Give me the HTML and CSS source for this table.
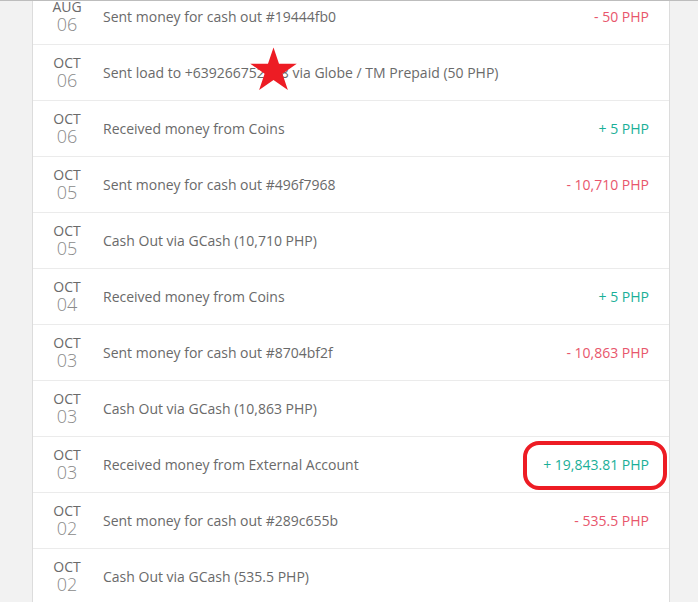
FILE: index.html
```html
<!DOCTYPE html>
<html>
<head>
<meta charset="utf-8">
<link rel="stylesheet" href="styles.css">
</head>
<body>
<div class="viewport">
  <div class="list">
    <div class="row"><div class="date"><span class="mon">AUG</span><span class="day">06</span></div><div class="desc">Sent money for cash out #19444fb0</div><div class="amt neg">- 50 PHP</div></div>
    <div class="row"><div class="date"><span class="mon">OCT</span><span class="day">06</span></div><div class="desc">Sent load to +639266752348 via Globe / TM Prepaid (50 PHP)</div><div class="amt"></div>
      <svg class="star" width="51" height="44" viewBox="0 0 49 44" preserveAspectRatio="none"><polygon fill="#ed1c24" points="24.5,0.5 29.79,16.72 46.85,16.74 33.06,26.78 38.31,43.01 24.5,33 10.69,43.01 15.94,26.78 2.15,16.74 19.21,16.72"/></svg>
    </div>
    <div class="row"><div class="date"><span class="mon">OCT</span><span class="day">06</span></div><div class="desc">Received money from Coins</div><div class="amt pos">+ 5 PHP</div></div>
    <div class="row"><div class="date"><span class="mon">OCT</span><span class="day">05</span></div><div class="desc">Sent money for cash out #496f7968</div><div class="amt neg">- 10,710 PHP</div></div>
    <div class="row"><div class="date"><span class="mon">OCT</span><span class="day">05</span></div><div class="desc">Cash Out via GCash (10,710 PHP)</div><div class="amt"></div></div>
    <div class="row"><div class="date"><span class="mon">OCT</span><span class="day">04</span></div><div class="desc">Received money from Coins</div><div class="amt pos">+ 5 PHP</div></div>
    <div class="row"><div class="date"><span class="mon">OCT</span><span class="day">03</span></div><div class="desc">Sent money for cash out #8704bf2f</div><div class="amt neg">- 10,863 PHP</div></div>
    <div class="row"><div class="date"><span class="mon">OCT</span><span class="day">03</span></div><div class="desc">Cash Out via GCash (10,863 PHP)</div><div class="amt"></div></div>
    <div class="row"><div class="date"><span class="mon">OCT</span><span class="day">03</span></div><div class="desc">Received money from External Account</div><div class="amt pos">+ 19,843.81 PHP</div>
      <div class="circle"></div>
    </div>
    <div class="row"><div class="date"><span class="mon">OCT</span><span class="day">02</span></div><div class="desc">Sent money for cash out #289c655b</div><div class="amt neg">- 535.5 PHP</div></div>
    <div class="row"><div class="date"><span class="mon">OCT</span><span class="day">02</span></div><div class="desc">Cash Out via GCash (535.5 PHP)</div><div class="amt"></div></div>
  </div>
</div>
</body>
</html>
```

FILE: styles.css
```css
html, body {
  margin: 0;
  padding: 0;
  background: #f2f2f2;
  font-family: "Open Sans", "Liberation Sans", sans-serif;
}
.viewport {
  height: 601px;
  overflow: hidden;
  border-top: 1px solid #bdbdbd;
}
.list {
  margin: -12px 0 0 32px;
  width: 636px;
  background: #fff;
  border-left: 1px solid #dcdcdc;
  border-right: 1px solid #dcdcdc;
}
.row {
  position: relative;
  display: flex;
  align-items: center;
  height: 55px;
  border-bottom: 1px solid #ebebeb;
}
.date {
  width: 68px;
  display: flex;
  flex-direction: column;
  align-items: center;
  color: #6a6a6a;
}
.mon {
  font-size: 14px;
  line-height: 16px;
}
.day {
  font-size: 18px;
  line-height: 19px;
  font-weight: 300;
  color: #8a8a8a;
}
.desc {
  flex: 1;
  padding-left: 2px;
  font-size: 14px;
  color: #6a6a6a;
}
.amt {
  padding-right: 20px;
  font-size: 14px;
}
.neg { color: #e8566c; }
.pos { color: #1aaf98; }
.star {
  position: absolute;
  left: 215px;
  top: 2px;
}
.circle {
  position: absolute;
  left: 490px;
  top: 4px;
  width: 136px;
  height: 41px;
  border: 4px solid #ed1c24;
  border-radius: 16px;
}
```
